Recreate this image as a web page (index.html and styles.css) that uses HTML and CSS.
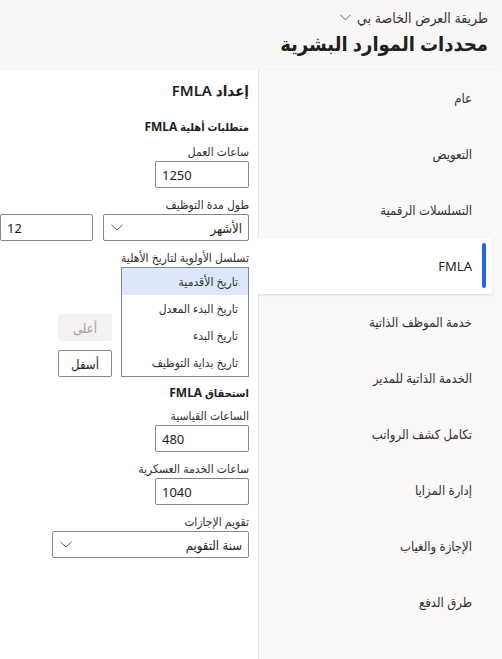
FILE: index.html
```html
<!DOCTYPE html>
<html lang="ar" dir="rtl">
<head>
<meta charset="utf-8">
<link rel="stylesheet" href="styles.css">
</head>
<body>
<header class="header">
  <div class="crumb">طريقة العرض الخاصة بي
    <svg class="crumb-chev" width="11" height="7" viewBox="0 0 11 7"><path d="M0.5 0.8 L5.5 5.8 L10.5 0.8" fill="none" stroke="#605e5c" stroke-width="1"/></svg>
  </div>
  <h1 class="page-title">محددات الموارد البشرية</h1>
</header>
<main class="main">
  <nav class="nav">
    <div class="nav-item">عام</div>
    <div class="nav-item">التعويض</div>
    <div class="nav-item">التسلسلات الرقمية</div>
    <div class="nav-item active">FMLA<span class="bar"></span></div>
    <div class="nav-item">خدمة الموظف الذاتية</div>
    <div class="nav-item">الخدمة الذاتية للمدير</div>
    <div class="nav-item">تكامل كشف الرواتب</div>
    <div class="nav-item">إدارة المزايا</div>
    <div class="nav-item">الإجازة والغياب</div>
    <div class="nav-item">طرق الدفع</div>
  </nav>
  <section class="panel">
    <div class="col">
      <h2 class="panel-title">إعداد FMLA</h2>
      <div class="section">متطلبات أهلية <span class="latin-b">FMLA</span></div>
      <div class="field">
        <div class="label">ساعات العمل</div>
        <div class="input w94">1250</div>
      </div>
      <div class="field">
        <div class="label">طول مدة التوظيف</div>
        <div class="row">
          <div class="select w146"><span>الأشهر</span><svg class="chev" width="12" height="7" viewBox="0 0 12 7"><path d="M0.5 0.8 L6 6 L11.5 0.8" fill="none" stroke="#605e5c" stroke-width="1"/></svg></div>
          <div class="input w93">12</div>
        </div>
      </div>
      <div class="field">
        <div class="label">تسلسل الأولوية لتاريخ الأهلية</div>
        <div class="row list-row">
          <div class="listbox">
            <div class="opt sel">تاريخ الأقدمية</div>
            <div class="opt">تاريخ البدء المعدل</div>
            <div class="opt">تاريخ البدء</div>
            <div class="opt">تاريخ بداية التوظيف</div>
          </div>
          <div class="btns">
            <div class="btn disabled">أعلى</div>
            <div class="btn">أسفل</div>
          </div>
        </div>
      </div>
      <div class="section s2">استحقاق <span class="latin-b">FMLA</span></div>
      <div class="field f4">
        <div class="label">الساعات القياسية</div>
        <div class="input w94">480</div>
      </div>
      <div class="field">
        <div class="label">ساعات الخدمة العسكرية</div>
        <div class="input w94">1040</div>
      </div>
      <div class="field">
        <div class="label">تقويم الإجازات</div>
        <div class="select w197"><span>سنة التقويم</span><svg class="chev" width="12" height="7" viewBox="0 0 12 7"><path d="M0.5 0.8 L6 6 L11.5 0.8" fill="none" stroke="#605e5c" stroke-width="1"/></svg></div>
      </div>
    </div>
  </section>
</main>
</body>
</html>
```
FILE: styles.css
```css
* { box-sizing: border-box; }
html, body { margin: 0; padding: 0; }
body {
  width: 502px;
  height: 659px;
  overflow: hidden;
  background: #f8f7f6;
  font-family: "Noto Sans", "DejaVu Sans Condensed", "DejaVu Sans", sans-serif;
  color: #323130;
}
.header {
  height: 70px;
  padding: 8px 14px 0 0;
}
.crumb {
  display: flex;
  align-items: center;
  gap: 6px;
  font-size: 14px;
  line-height: 20px;
  color: #323130;
}
.crumb-chev { margin-top: -2px; }
.page-title {
  margin: 0;
  font-size: 20px;
  font-weight: 600;
  line-height: 32px;
  color: #201f1e;
}
.main {
  display: flex;
  height: 589px;
}
.nav {
  width: 244px;
  flex: none;
  background: #faf9f8;
  border-left: 1px solid #e6e4e2;
  box-shadow: -1px 0 2px rgba(0,0,0,0.05);
  padding-right: 10px;
}
.nav-item {
  position: relative;
  height: 56px;
  display: flex;
  align-items: center;
  padding-right: 20px;
  font-size: 13px;
  color: #323130;
}
.nav-item.active {
  background: #ffffff;
  box-shadow: 0 1px 2px rgba(0,0,0,0.12);
  margin-left: -1px;
  color: #201f1e;
}
.bar {
  position: absolute;
  right: 6px;
  top: 5px;
  width: 4px;
  height: 45px;
  border-radius: 2px;
  background: #2266e3;
}
.panel {
  flex: 1;
  background: #ffffff;
  overflow: hidden;
  padding: 10px 9px 0 0;
  position: relative;
  z-index: 1;
}
.col {
  display: flex;
  flex-direction: column;
  align-items: flex-start;
}
.panel-title {
  margin: 0;
  font-size: 15px;
  font-weight: 600;
  line-height: 20px;
  color: #201f1e;
}
.section {
  margin-top: 19px;
  font-size: 11px;
  font-weight: 700;
  line-height: 16px;
  color: #201f1e;
}
.latin-b { font-weight: 700; font-size: 12px; }
.section.s2 { margin-top: 8px; }
.field { margin-top: 9px; }
.field.f4 { margin-top: 7px; }
.label {
  font-size: 12px;
  line-height: 16px;
  margin-bottom: 1px;
  color: #323130;
}
.input, .select {
  height: 27px;
  border: 1px solid #8a8886;
  border-radius: 2px;
  background: #fff;
  font-size: 13px;
  display: flex;
  align-items: center;
}
.input {
  direction: ltr;
  padding-left: 6px;
  color: #201f1e;
}
.w94 { width: 94px; }
.w93 { width: 93px; }
.w146 { width: 146px; }
.w197 { width: 197px; }
.select {
  justify-content: space-between;
  padding: 0 6px 0 6px;
  color: #201f1e;
}
.chev { flex: none; margin-left: 1px; }
.row {
  display: flex;
  gap: 10px;
  align-items: flex-start;
}
.list-row { gap: 9px; align-items: stretch; }
.listbox {
  width: 128px;
  border: 1px solid #8a8886;
  background: #fff;
}
.opt {
  height: 27px;
  display: flex;
  align-items: center;
  padding-right: 10px;
  font-size: 12px;
  color: #323130;
}
.opt.sel { background: #dce7f9; }
.btns {
  display: flex;
  flex-direction: column;
  justify-content: flex-end;
  gap: 9px;
}
.btn {
  width: 54px;
  height: 27px;
  border: 1px solid #8a8886;
  border-radius: 2px;
  background: #fff;
  display: flex;
  align-items: center;
  justify-content: center;
  font-size: 13px;
  color: #201f1e;
}
.btn.disabled {
  border-color: #f3f2f1;
  background: #f3f2f1;
  color: #a19f9d;
}
```
